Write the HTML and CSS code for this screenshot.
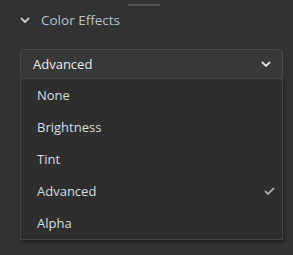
FILE: index.html
```html
<!DOCTYPE html>
<html>
<head>
<meta charset="utf-8">
<link rel="stylesheet" href="styles.css">
</head>
<body>
<div class="panel">
  <div class="grip"></div>
  <div class="section-head">
    <svg class="chev" width="10" height="7" viewBox="0 0 10 7"><path d="M1.5 1.5 L5 5 L8.5 1.5" fill="none" stroke="#c8c8c8" stroke-width="1.8" stroke-linecap="round" stroke-linejoin="round"/></svg>
    <span class="title">Color Effects</span>
  </div>
  <div class="select">
    <div class="select-btn">
      <span>Advanced</span>
      <svg class="chev" width="10" height="7" viewBox="0 0 10 7"><path d="M1.5 1.5 L5 5 L8.5 1.5" fill="none" stroke="#e0e0e0" stroke-width="1.8" stroke-linecap="round" stroke-linejoin="round"/></svg>
    </div>
    <ul class="menu">
      <li>None</li>
      <li>Brightness</li>
      <li>Tint</li>
      <li class="selected">Advanced<svg class="check" width="11" height="9" viewBox="0 0 11 9"><path d="M1.5 4.5 L4 7 L9.5 1.5" fill="none" stroke="#a8a8a8" stroke-width="1.8" stroke-linecap="round" stroke-linejoin="round"/></svg></li>
      <li>Alpha</li>
    </ul>
  </div>
</div>
</body>
</html>
```
FILE: styles.css
```css
html, body {
  margin: 0;
  padding: 0;
  background: #323232;
  width: 293px;
  height: 255px;
  overflow: hidden;
}
.panel {
  font-family: "Open Sans", "Noto Sans", sans-serif;
  font-size: 13px;
  padding: 4px 10px 0 20px;
}
.grip {
  width: 32px;
  height: 2px;
  background: #555555;
  margin: 0 0 0 108px;
}
.section-head {
  display: flex;
  align-items: center;
  height: 28px;
}
.section-head .chev {
  margin-right: 11px;
}
.title {
  color: #b9c3cf;
  font-size: 13.5px;
}
.select {
  margin-top: 15px;
}
.select-btn {
  height: 28px;
  border: 1px solid #4c4c4c;
  border-radius: 4px;
  background: #383838;
  display: flex;
  align-items: center;
  justify-content: space-between;
  padding: 0 11px 0 12px;
  color: #ececec;
}
.menu {
  list-style: none;
  margin: -1px 0 0 0;
  padding: 0;
  background: #2e2e2e;
  border: 1px solid #454545;
  box-shadow: 1px 2px 3px rgba(0,0,0,0.45);
  width: 261px;
}
.menu li {
  height: 32px;
  display: flex;
  align-items: center;
  justify-content: space-between;
  padding: 0 7px 0 16px;
  color: #d6dde4;
}
```
